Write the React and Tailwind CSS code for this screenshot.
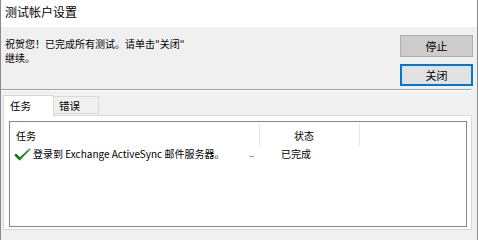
import React from 'react';

const FONT = { fontFamily: '"Noto Sans CJK SC", "Liberation Sans", sans-serif' };

const CheckIcon = () => (
  <svg width="17" height="13" viewBox="0 0 17 13" className="shrink-0">
    <path d="M0.5 7.2 L2 5.8 L5.6 9.2 L15.6 0.4 L16.6 1.3 L5.8 12.4 Z" fill="#1f8a1f" />
    <path d="M2 5.8 L5.6 9.2 L5.8 12.4 L0.5 7.2 Z" fill="#0f6b0f" />
  </svg>
);

export default function App() {
  return (
    <div
      className="w-[478px] h-[240px] overflow-hidden border-l border-r border-[#8a8a8a] bg-[#f0f0f0] text-black flex flex-col"
      style={FONT}
    >
      {/* title */}
      <div className="h-[27px] shrink-0 bg-white pl-[4px] pt-[4px] text-[12px] leading-[16px]">
        测试帐户设置
      </div>

      {/* message + buttons */}
      <div className="h-[62px] shrink-0 flex">
        <div className="flex-1 pl-[4px] pt-[10px] text-[10px] leading-[14px]">
          <div>祝贺您！已完成所有测试。请单击"关闭"</div>
          <div>继续。</div>
        </div>
        <div className="w-[73px] mr-[4px] pt-[8px] flex flex-col gap-[7px]">
          <button className="h-[22px] bg-[#cccccc] border border-[#adadad] text-[11px] leading-none">
            停止
          </button>
          <button className="h-[22px] bg-[#e1e1e1] border-2 border-[#0078d7] text-[11px] leading-none">
            关闭
          </button>
        </div>
      </div>

      {/* separator */}
      <div className="mr-[6px] border-t border-[#a0a0a0] border-b border-b-white" />

      {/* tabs */}
      <div className="mt-[4px] ml-[2px] flex items-end h-[21px] relative z-10">
        <div className="w-[51px] h-[21px] bg-white border border-b-0 border-[#d9d9d9] pl-[6px] pt-[3px] text-[10.5px] leading-[14px]">
          任务
        </div>
        <div className="w-[45px] h-[18px] mb-[2px] bg-[#f0f0f0] border border-l-0 border-[#d9d9d9] pl-[5px] pt-[2px] text-[10.5px] leading-[14px]">
          错误
        </div>
      </div>

      {/* panel */}
      <div className="-mt-[1px] ml-[2px] mr-[5px] h-[115px] bg-white border border-[#d9d9d9] pt-[5px] pl-[5px] pr-[4px] pb-[2px]">
        <div className="h-full border border-[#828790] bg-white text-[10px] leading-[14px]">
          {/* header */}
          <div className="flex h-[24px] pt-[1px]">
            <div className="w-[250px] pl-[6px] pt-[6px] border-r border-[#e5e5e5]">任务</div>
            <div className="w-[100px] pl-[34px] pt-[6px] border-r border-[#e5e5e5]">状态</div>
          </div>
          {/* row */}
          <div className="flex h-[16px] items-center">
            <div className="w-[250px] pl-[4px] flex items-center">
              <CheckIcon />
              <span className="ml-[2px] flex-1 whitespace-nowrap">登录到 Exchange ActiveSync 邮件服务器。</span>
              <span className="mr-[6px] text-[8px]">..</span>
            </div>
            <div className="w-[100px] pl-[21px]">已完成</div>
          </div>
        </div>
      </div>
    </div>
  );
}
